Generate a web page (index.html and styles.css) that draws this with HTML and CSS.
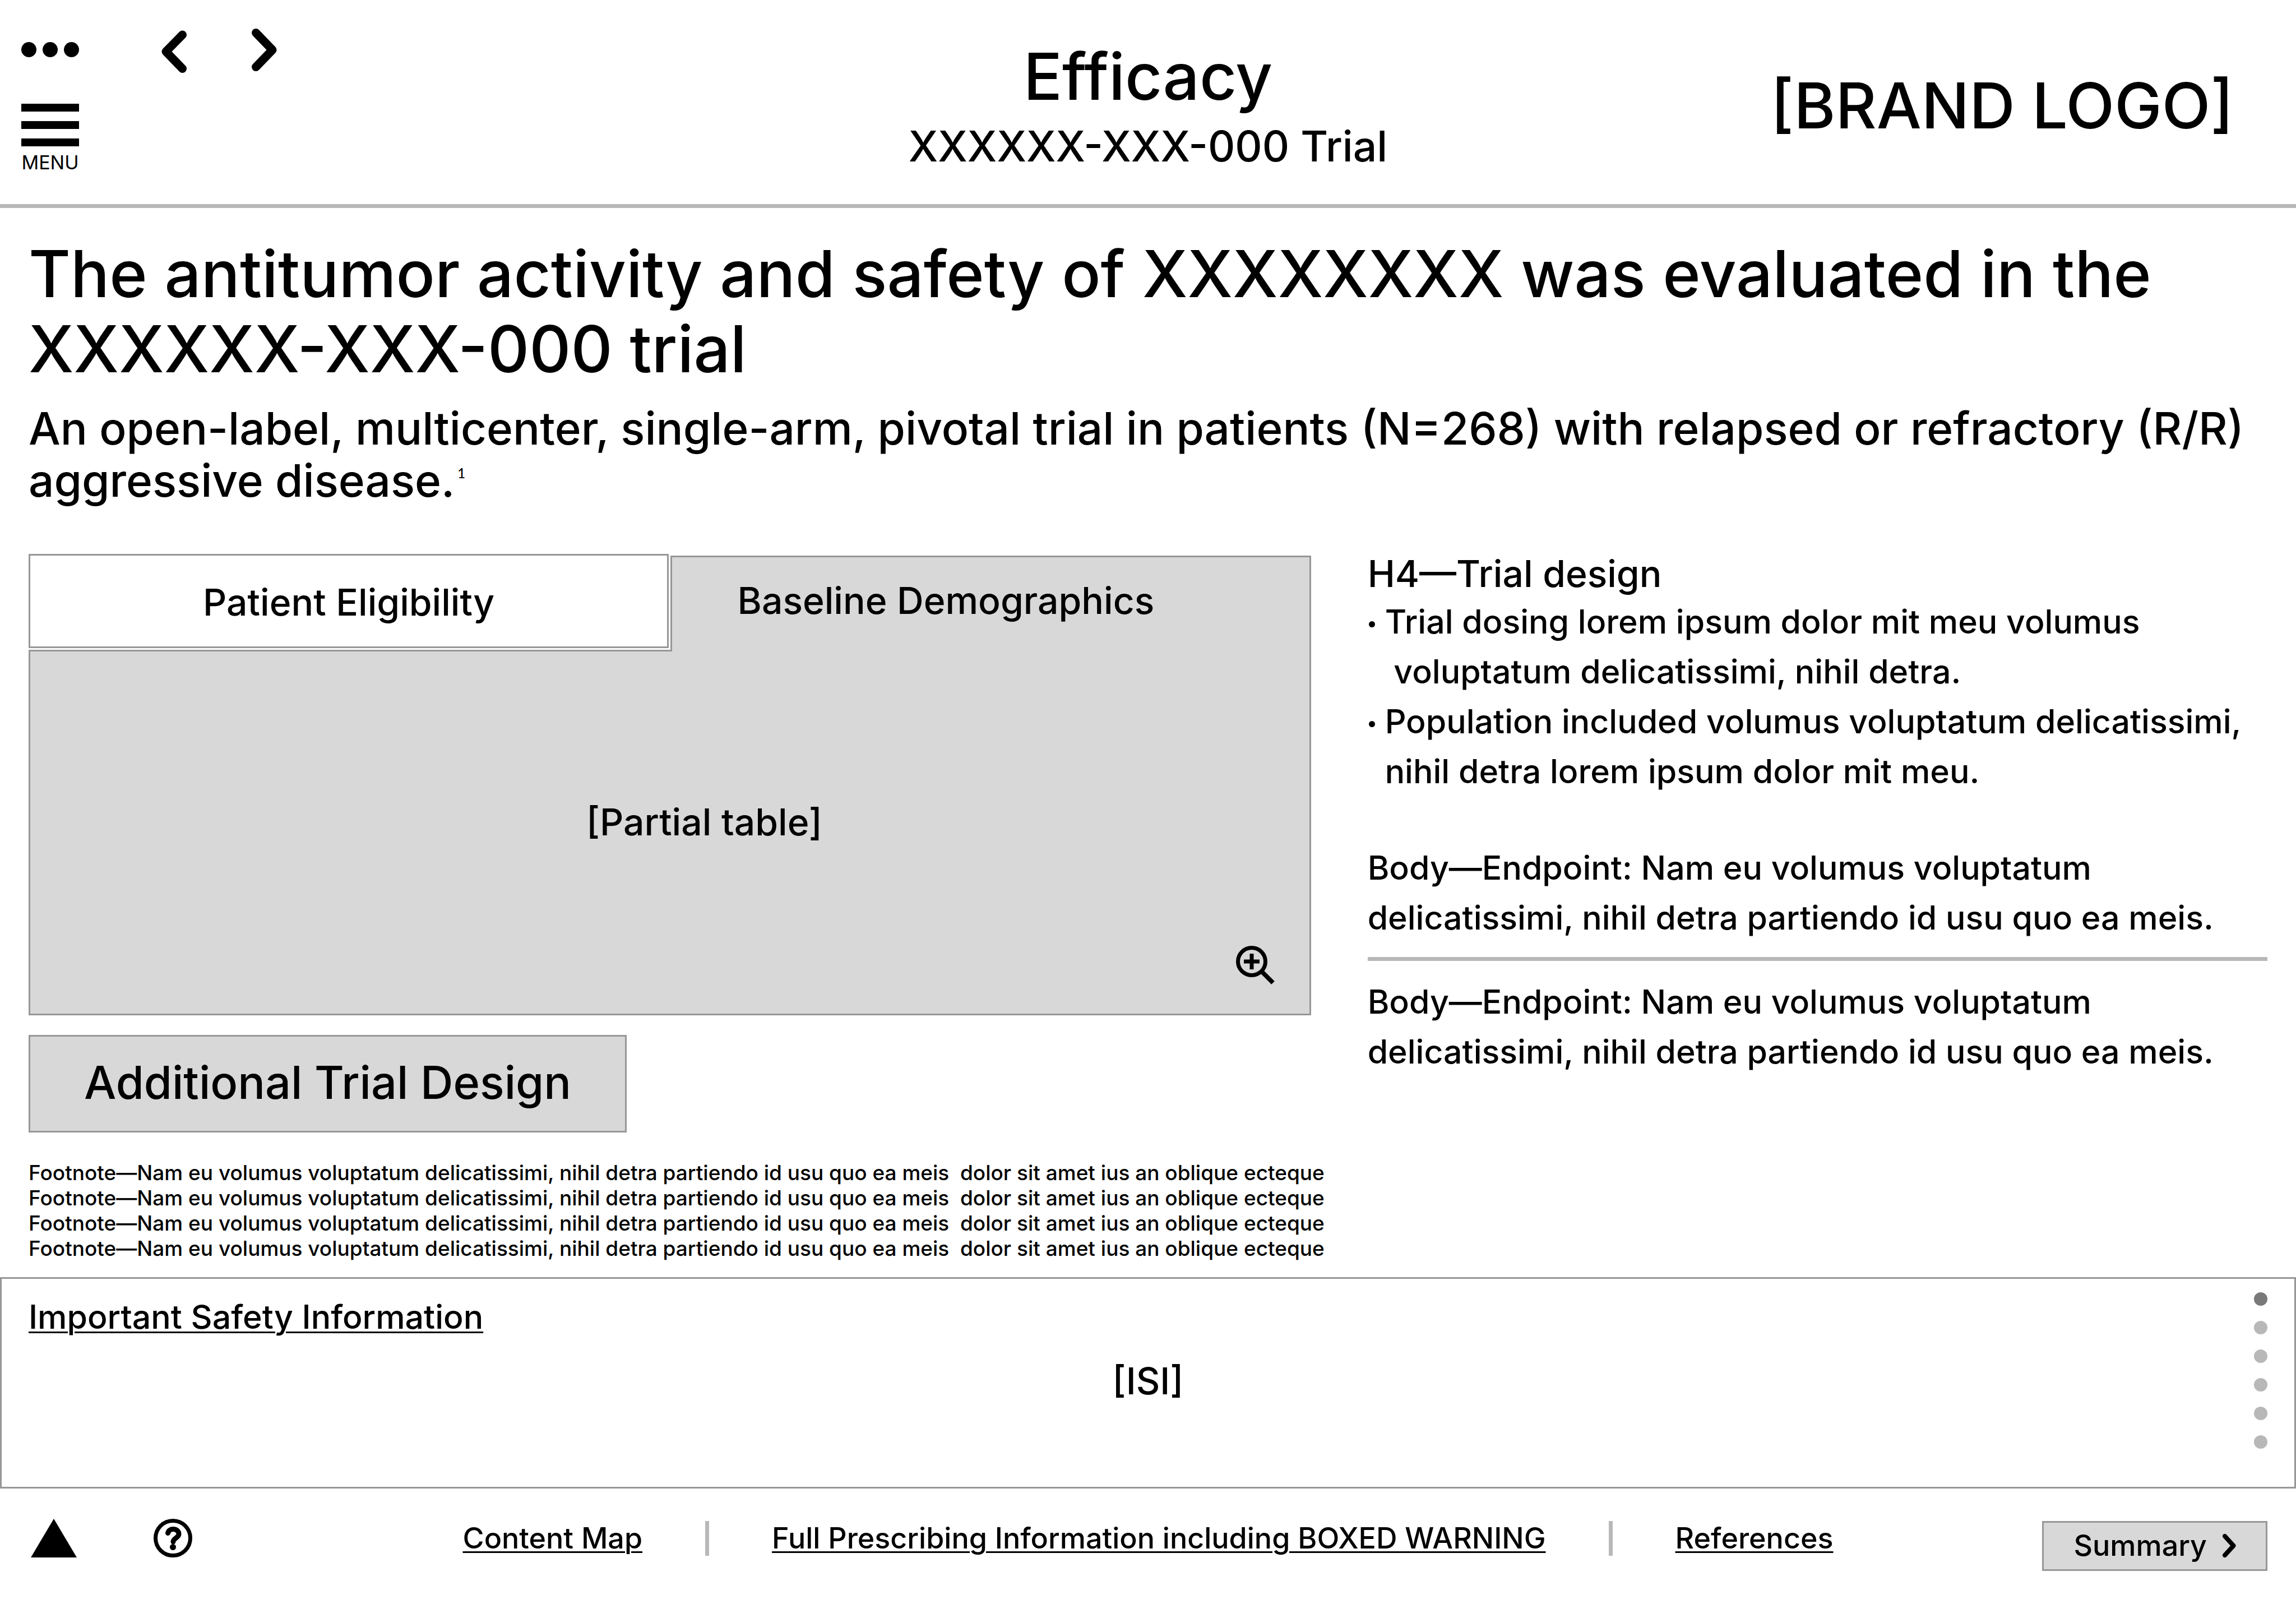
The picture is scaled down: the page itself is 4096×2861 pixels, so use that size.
FILE: index.html
```html
<!DOCTYPE html>
<html lang="en">
<head>
<meta charset="utf-8">
<meta name="viewport" content="width=device-width, initial-scale=1">
<title>Efficacy</title>
<link rel="stylesheet" href="styles.css">
</head>
<body>
<header class="header">
  <div class="header-tools">
    <div class="menu-column">
      <button class="icon-button more" type="button" aria-label="More options">
        <svg width="103" height="27" viewBox="0 0 103 27"><circle cx="13.5" cy="13.5" r="13.5"/><circle cx="51.5" cy="13.5" r="13.5"/><circle cx="89.5" cy="13.5" r="13.5"/></svg>
      </button>
      <button class="icon-button menu" type="button">
        <svg width="103" height="76" viewBox="0 0 103 76"><path d="M0 0h103v14H0zM0 31h103v14H0zM0 62h103v14H0z"/></svg>
        <span>MENU</span>
      </button>
    </div>
    <nav class="pager" aria-label="Pages">
      <button class="icon-button" type="button" aria-label="Previous">
        <svg width="45" height="79" viewBox="0 0 45 79"><path class="stroke" d="M37.500 11L8 41l29.500 30.500"/></svg>
      </button>
      <button class="icon-button" type="button" aria-label="Next">
        <svg width="45" height="79" viewBox="0 0 45 79"><path class="stroke" d="M7.500 7.500L37 38 7.500 68.500"/></svg>
      </button>
    </nav>
  </div>
  <div class="header-title">
    <h1 class="title">Efficacy</h1>
    <p class="subtitle">XXXXXX-XXX-000 Trial</p>
  </div>
  <div class="brand">[BRAND LOGO]</div>
</header>

<main class="main">
  <h2 class="headline">The antitumor activity and safety of XXXXXXXX was evaluated in the XXXXXX-XXX-000 trial</h2>
  <p class="lead">An open-label, multicenter, single-arm, pivotal trial in patients (N=268) with relapsed or refractory (R/R) aggressive disease.<sup>1</sup></p>

  <div class="columns">
    <section class="study">
      <div class="tabs" role="tablist">
        <button class="tab" type="button" role="tab" aria-selected="false">Patient Eligibility</button>
        <button class="tab tab-active" type="button" role="tab" aria-selected="true">Baseline Demographics</button>
      </div>
      <div class="panel" role="tabpanel">
        <span>[Partial table]</span>
        <button class="icon-button zoom" type="button" aria-label="Enlarge table">
          <svg width="69" height="69" viewBox="0 0 69 69"><g fill="none" stroke="#000"><circle cx="28" cy="28" r="24.500" stroke-width="7"/><path stroke-width="7" d="M28 14v28M14 28h28"/><path stroke-width="8" d="M46 46l20 20"/></g></svg>
        </button>
      </div>
      <button class="box-button additional" type="button">Additional Trial Design</button>
    </section>

    <aside class="details">
      <h3 class="details-title">H4—Trial design</h3>
      <ul class="bullets">
        <li>Trial dosing lorem ipsum dolor mit meu volumus <br>&nbsp;voluptatum delicatissimi, nihil detra.</li>
        <li>Population included volumus voluptatum delicatissimi, <br>nihil detra lorem ipsum dolor mit meu.</li>
      </ul>
      <p class="endpoint">Body—Endpoint: Nam eu volumus voluptatum<br>delicatissimi, nihil detra partiendo id usu quo ea meis.</p>
      <hr class="divider">
      <p class="endpoint">Body—Endpoint: Nam eu volumus voluptatum<br>delicatissimi, nihil detra partiendo id usu quo ea meis.</p>
    </aside>
  </div>

  <div class="footnotes">
    <p>Footnote—Nam eu volumus voluptatum delicatissimi, nihil detra partiendo id usu quo ea meis  dolor sit amet ius an oblique ecteque</p>
    <p>Footnote—Nam eu volumus voluptatum delicatissimi, nihil detra partiendo id usu quo ea meis  dolor sit amet ius an oblique ecteque</p>
    <p>Footnote—Nam eu volumus voluptatum delicatissimi, nihil detra partiendo id usu quo ea meis  dolor sit amet ius an oblique ecteque</p>
    <p>Footnote—Nam eu volumus voluptatum delicatissimi, nihil detra partiendo id usu quo ea meis  dolor sit amet ius an oblique ecteque</p>
  </div>
</main>

<section class="isi">
  <a class="isi-link" href="#isi">Important Safety Information</a>
  <p class="isi-label" id="isi">[ISI]</p>
  <div class="dots" aria-hidden="true"><i class="dot dot-active"></i><i class="dot"></i><i class="dot"></i><i class="dot"></i><i class="dot"></i><i class="dot"></i></div>
</section>

<footer class="footer">
  <div class="footer-icons">
    <button class="icon-button" type="button" aria-label="Back to top">
      <svg width="82" height="69" viewBox="0 0 82 69"><path d="M41 0l41 69H0z"/></svg>
    </button>
    <button class="icon-button" type="button" aria-label="Help">
      <svg width="69" height="69" viewBox="0 0 69 69"><g fill="none" stroke="#000"><circle cx="34.500" cy="34.500" r="31" stroke-width="7"/><path stroke-width="9" stroke-linecap="round" d="M25.500 25.500c1-5 5-7 9.500-7 6 0 10 4 10 8.500 0 7-10 7.500-10 14"/></g><circle cx="34.500" cy="50.500" r="5.500"/></svg>
    </button>
  </div>
  <nav class="footer-links" aria-label="Resources">
    <a href="#map">Content Map</a>
    <a href="#prescribing">Full Prescribing Information including BOXED WARNING</a>
    <a href="#references">References</a>
  </nav>
  <button class="box-button summary" type="button">Summary
    <svg width="24" height="42" viewBox="0 0 24 42"><path class="stroke-thin" d="M4 4l15.500 17L4 38"/></svg>
  </button>
</footer>
</body>
</html>
```
FILE: styles.css
```css
* {
  box-sizing: border-box;
}

body,
h1,
h2,
h3,
p,
ul {
  margin: 0;
  padding: 0;
  font-weight: inherit;
}

body {
  min-height: 100vh;
  display: flex;
  flex-direction: column;
  background: #fff;
  color: #000;
  font-family: Inter, "Open Sans", sans-serif;
  font-weight: 500;
  font-size: 59px;
}

a {
  color: inherit;
  text-decoration-thickness: 3px;
  text-underline-offset: 5px;
}

button {
  margin: 0;
  border: 0;
  padding: 0;
  background: none;
  color: inherit;
  font: inherit;
  cursor: pointer;
}

svg {
  display: block;
}

.icon-button {
  display: block;
}

.stroke,
.stroke-thin {
  fill: none;
  stroke: #000;
  stroke-width: 15px;
  stroke-linecap: round;
  stroke-linejoin: round;
}

.stroke-thin {
  stroke-width: 8px;
}

/* Header */

.header {
  display: grid;
  grid-template-columns: 1fr auto 1fr;
  border-bottom: 7px solid #b8b8b8;
  min-height: 371px;
}

.header-tools {
  display: flex;
  align-items: flex-start;
  gap: 147px;
  padding: 0 38px;
}

.menu-column {
  padding-top: 75px;
}

.menu {
  margin-top: 83px;
  font-size: 34px;
  font-weight: 400;
  line-height: 40px;
}

.menu span {
  display: block;
  margin-top: 9px;
  text-align: center;
}

.pager {
  display: flex;
  gap: 116px;
  padding-top: 51px;
}

.header-title {
  padding-top: 70px;
  text-align: center;
}

.title {
  font-size: 115px;
  line-height: 134px;
}

.subtitle {
  font-size: 75px;
  line-height: 93px;
  margin-top: 10px;
}

.brand {
  align-self: center;
  justify-self: end;
  padding: 12px 111px 0 0;
  font-size: 113px;
  line-height: 134px;
}

/* Main content */

.main {
  padding: 51px 51px 29px;
}

.headline {
  font-size: 115px;
  line-height: 134px;
}

.lead {
  margin-top: 27px;
  font-size: 80px;
  line-height: 93px;
}

.lead sup {
  margin-left: 5px;
  font-family: Lato, sans-serif;
  font-size: 24px;
  line-height: 1;
  vertical-align: 33px;
}

.columns {
  display: grid;
  grid-template-columns: 57fr 40fr;
  column-gap: 101px;
  margin-top: 85px;
}

.tabs {
  display: grid;
  grid-template-columns: 1fr 1fr;
  column-gap: 3px;
  font-size: 66px;
  line-height: 80px;
}

.tab {
  border: 3px solid #979797;
  padding: 43px 20px 39px;
  background: #fff;
}

.tab-active {
  position: relative;
  z-index: 1;
  margin: 3px 0 -6px;
  border-bottom: 0;
  padding: 35px 180px 50px 20px;
  background: #d8d8d8;
}

.panel {
  position: relative;
  display: flex;
  align-items: center;
  justify-content: center;
  min-height: 652px;
  margin-top: 3px;
  border: 3px solid #979797;
  padding: 0 0 38px 123px;
  background: #d8d8d8;
  font-size: 66px;
  line-height: 80px;
}

.zoom {
  position: absolute;
  right: 62px;
  bottom: 52px;
}

.box-button {
  border: 3px solid #979797;
  background: #d8d8d8;
}

.additional {
  display: block;
  margin-top: 35px;
  padding: 36px 96px 39px;
  font-size: 81px;
  line-height: 93px;
}

.details-title {
  font-size: 66px;
  line-height: 70px;
}

.bullets {
  margin-top: 6px;
  list-style: none;
  line-height: 89px;
}

.bullets li {
  position: relative;
  padding-left: 31px;
}

.bullets li::before {
  content: "";
  position: absolute;
  left: 2px;
  top: 44px;
  width: 11px;
  height: 11px;
  border-radius: 50%;
  background: #000;
}

.endpoint {
  line-height: 89px;
}

.bullets + .endpoint {
  margin-top: 83px;
}

.divider {
  height: 7px;
  margin: 26px 0 28px;
  border: 0;
  background: #b8b8b8;
}

.footnotes {
  margin-top: 49px;
  font-size: 37px;
  line-height: 45px;
}

.footnotes p {
  white-space: pre;
}

/* Safety information */

.isi {
  position: relative;
  min-height: 377px;
  border: 3px solid #979797;
  padding: 33px 48px 0;
}

.isi-link {
  display: block;
  width: fit-content;
  line-height: 70px;
}

.isi-label {
  margin-top: 39px;
  font-size: 66px;
  line-height: 80px;
  text-align: center;
}

.dots {
  position: absolute;
  top: 24px;
  right: 48px;
  display: grid;
  row-gap: 27px;
}

.dot {
  width: 24px;
  height: 24px;
  border-radius: 50%;
  background: #b8b8b8;
}

.dot-active {
  background: #797979;
}

/* Footer */

.footer {
  display: grid;
  grid-template-columns: 1fr auto 1fr;
  align-items: start;
  padding: 54px 51px 0;
  font-size: 52px;
}

.footer-icons {
  display: flex;
  gap: 137px;
  padding-left: 4px;
}

.footer-links {
  display: flex;
  line-height: 70px;
}

.footer-links a + a {
  position: relative;
  margin-left: 231px;
}

.footer-links a + a::before {
  content: "";
  position: absolute;
  left: -119px;
  top: 4px;
  width: 7px;
  height: 62px;
  background: #b8b8b8;
}

.summary {
  display: flex;
  align-items: center;
  justify-self: end;
  gap: 28px;
  margin-top: 4px;
  padding: 8px 53px 9px;
  line-height: 66px;
}
```
